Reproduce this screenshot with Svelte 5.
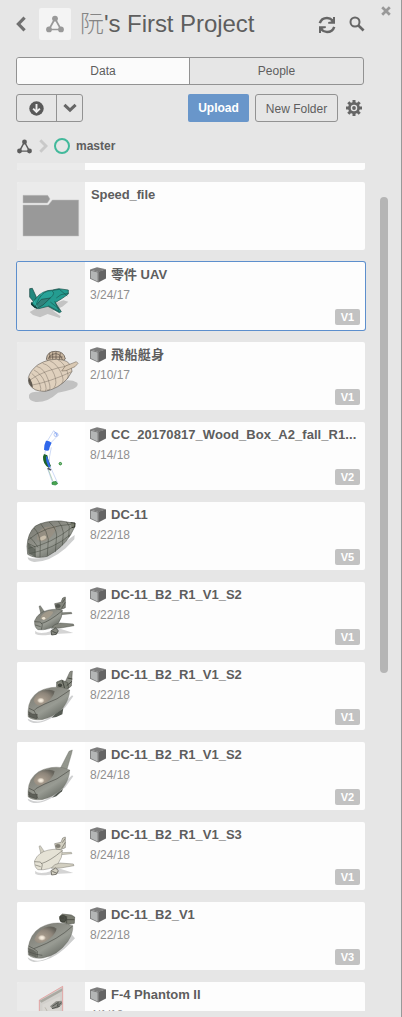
<script>
  const items = [
    { kind: 'blank', name: '', date: '', version: '' },
    { kind: 'folder', name: 'Speed_file', date: '', version: '' },
    { kind: 'uav', name: '零件 UAV', date: '3/24/17', version: 'V1', selected: true },
    { kind: 'airship', name: '飛船艇身', date: '2/10/17', version: 'V1', spaced: true },
    { kind: 'curve', name: 'CC_20170817_Wood_Box_A2_fall_R1...', date: '8/14/18', version: 'V2', wide: true },
    { kind: 'mesh', name: 'DC-11', date: '8/22/18', version: 'V5' },
    { kind: 'plane', name: 'DC-11_B2_R1_V1_S2', date: '8/22/18', version: 'V1' },
    { kind: 'engine', name: 'DC-11_B2_R1_V1_S2', date: '8/22/18', version: 'V1' },
    { kind: 'fin', name: 'DC-11_B2_R1_V1_S2', date: '8/24/18', version: 'V2' },
    { kind: 'paleplane', name: 'DC-11_B2_R1_V1_S3', date: '8/24/18', version: 'V1' },
    { kind: 'pod', name: 'DC-11_B2_V1', date: '8/22/18', version: 'V3' },
    { kind: 'phantom', name: 'F-4 Phantom II', date: '4/1/18', version: '' }
  ];
  const tinted = ['blank', 'folder', 'uav', 'airship', 'phantom'];
  const boxes = {
    uav: '51 306 204 204',
    airship: '21 21 204 204',
    curve: '21 261 204 204',
    mesh: '21 21 204 204',
    plane: '21 261 204 204',
    engine: '21 21 204 204',
    fin: '21 261 204 204',
    paleplane: '21 21 204 204',
    pod: '21 261 204 204',
    phantom: '21 501 204 204',
    folder: '51 66 204 204',
    blank: '0 0 204 204'
  };
</script>

{#snippet network(size, color)}
  <svg width={size} height={size} viewBox="0 0 18 18" fill={color} stroke={color}>
    <path d="M9 3.5L3 14.5H15Z" fill="none" stroke-width="1.7" />
    <circle cx="9" cy="3.6" r="2.9" stroke="none" />
    <circle cx="3" cy="14.4" r="2.9" stroke="none" />
    <circle cx="15" cy="14.4" r="2.9" stroke="none" />
  </svg>
{/snippet}

{#snippet planeShape(body, edge, wing)}
  <path d="M75 408Q90 421 126 407L140 398L165 406L190 414L150 416L120 419Q88 424 76 417Z" fill="#d4d4d4" />
  <path d="M87 334L91 332L104 351L94 363Z" fill={wing} stroke={edge} stroke-width="1" />
  <path d="M152 353L184 352L186 356L154 359Z" fill={wing} stroke={edge} stroke-width="1" />
  <path d="M74 377Q85 351 116 345Q144 340 157 346Q158 367 143 388Q116 407 84 404Q72 397 74 377Z" fill={body} stroke={edge} stroke-width="1.2" />
  <path d="M94 386Q120 378 157 347M73 380L91 381L97 389L94 404M76 390L92 395" fill="none" stroke={edge} stroke-width="1.7" />
  <path d="M134 389L150 384L190 387L192 392L152 399L124 400Z" fill={wing} stroke={edge} stroke-width="1.2" />
  <path d="M134 326L153 322L158 309L166 306L166 338L151 344L138 342Z" fill={wing} stroke={edge} stroke-width="1.5" />
  <ellipse cx="144" cy="333" rx="8" ry="6" fill={edge} opacity=".75" />
  <path d="M157 323L165 311M155 340L166 322" stroke={edge} stroke-width="2" />
  <path d="M123 407L137 399L145 407L139 418L125 420Z" fill={wing} stroke={edge} stroke-width="2.5" />
  <path d="M127 409L141 415" stroke={edge} stroke-width="2.5" />
{/snippet}

{#snippet hull()}
  <path d="M53 431Q88 450 120 425L186 361L190 364L166 397Q112 448 71 444Q54 440 53 431Z" fill="#d0d1d2" />
  <path d="M54 408Q56 369 86 350Q119 332 158 338L179 345Q179 371 159 399Q130 427 96 434Q68 437 54 425Z" fill="url(#grayHull)" stroke="#66665f" stroke-width="1" />
  <path d="M71 377Q74 358 97 347Q124 340 134 349Q130 373 95 391Q78 395 71 377Z" fill="url(#canopy)" />
  <path d="M57 400L72 407L79 400L102 388Q141 376 179 346M72 407L77 416L84 431M55 418L78 422" fill="none" stroke="#3c3c37" stroke-width="1.6" />
  <path d="M56 410Q66 419 82 418L80 432L58 425Z" fill="#5d5f58" stroke="#34342f" />
{/snippet}

{#snippet thumb(kind)}
  <svg width="68" height="68" viewBox={boxes[kind]}>
    {#if kind === 'folder'}
      <path d="M69 106H143L150 117L142 129H69ZM69 135H145L157 120H236V228H69Z" fill="#999" stroke="#bdbdbd" stroke-width="1.5" />
    {:else if kind === 'uav'}
      <path d="M89 456L109 445L142 439L190 421L205 425L187 440L159 452L182 469L179 474L143 462L120 472L99 465Z" fill="#c3c3c3" />
      <path d="M89 386L97 385L109 411L106 431L89 411Z" fill="#24887e" stroke="#17443f" stroke-width="2" />
      <path d="M106 417Q125 391 158 390L176 386L205 390L205 402L187 415L166 428L184 455L178 458L144 439L116 446L102 440L94 431Z" fill="#249c90" stroke="#174b45" stroke-width="2" />
      <path d="M117 416Q131 391 155 392Q168 399 152 413Q127 431 106 439Z" fill="#27a398" stroke="#1b5a53" stroke-width="2" />
      <path d="M106 439L124 418L151 414L129 435L110 446Z" fill="#32817a" stroke="#18443f" stroke-width="1.8" />
      <path d="M158 391L178 388L202 408M169 414L183 404L205 400M145 437L178 455L164 423M151 426L182 451" fill="none" stroke="#18443f" stroke-width="1.5" />
      <path d="M101 421L113 445M121 406L129 396" stroke="#3dbeb1" stroke-width="2" />
      <path d="M94 425L102 436L114 445L105 445L93 434" fill="#143f3a" />
    {:else if kind === 'airship'}
      <path d="M57 180Q63 168 92 171L153 138Q184 132 202 143Q207 153 189 162Q168 169 144 173Q112 203 77 201Q54 197 57 180Z" fill="#c1c1c1" />
      <path d="M109 73Q111 48 137 49Q162 49 166 72L154 81L121 84Z" fill="#c9b7a1" stroke="#4b443d" stroke-width="2" />
      <path d="M114 73Q119 58 137 56Q153 57 157 75M120 73L119 55M128 74V52M138 74V50M148 77L151 54M117 66L158 66" fill="none" stroke="#594d43" stroke-width="2" />
      <path d="M55 128Q60 107 84 89Q120 67 159 75Q184 81 186 109L173 130Q147 160 106 169Q70 171 57 146Z" fill="#dfd0bd" stroke="#3b3732" stroke-width="1.4" />
      <path d="M57 137Q103 103 183 91M63 151Q119 141 185 110M80 94Q103 100 115 135T111 165M98 85Q123 92 133 119T132 158M119 77Q141 87 153 113T154 146M143 74Q161 83 170 105T170 133M72 105Q96 118 104 142T105 168M65 115Q83 129 89 146T91 168" fill="none" stroke="#665b50" stroke-width="1.2" />
      <path d="M155 108L166 93L199 80L204 85L195 95L168 107Z" fill="#d9c9b4" stroke="#665a4c" stroke-width="1.5" />
      <path d="M58 127L66 143L69 158Q58 152 55 137Z" fill="#3a3630" opacity=".75" />
    {:else if kind === 'curve'}
      <path d="M112 318L131 287L145 300L124 322M107 339Q103 355 106 370M124 337Q116 366 118 394M112 399L129 447L142 442L123 400" fill="none" stroke="#8da8e9" stroke-width="1.3" />
      <path d="M114 401L128 437L138 447" fill="none" stroke="#67a467" stroke-width="1.3" />
      <path d="M108 317Q116 316 125 323Q118 336 117 346Q110 349 102 344Q102 328 108 317Z" fill="#3068eb" />
      <path d="M102 357L112 361Q115 381 123 393L116 398Q98 387 99 365Z" fill="#1d632a" />
      <path d="M111 362Q117 379 122 399L115 395Q107 379 108 366Z" fill="#3068eb" />
      <circle cx="138" cy="299" r="6" fill="#fff" stroke="#7999e6" stroke-width="1.5" />
      <path d="M133 290L142 300M139 295V303" stroke="#3b70ed" stroke-width="1.4" />
      <circle cx="151" cy="386" r="3.7" fill="#91bd91" stroke="#258c31" stroke-width="3" />
      <path d="M113 400L123 405" stroke="#555665" stroke-width="5" />
      <path d="M126 442L138 439L143 446L136 450L126 448Z" fill="#49a54f" stroke="#208039" stroke-width="2" />
    {:else if kind === 'mesh'}
      <path d="M53 187Q75 195 103 185L194 120L193 133L167 160Q118 202 72 201Q53 198 53 187Z" fill="#cecfcf" />
      <path d="M51 154Q53 114 76 93Q106 76 153 78L195 85L194 96L181 121Q158 158 112 184Q75 193 53 178Z" fill="url(#grayHull)" stroke="#383c35" stroke-width="1.5" />
      <path d="M80 133Q82 106 106 96L138 93Q139 111 117 132Q96 145 80 133Z" fill="#9a9082" opacity=".7" />
      <ellipse cx="99" cy="129" rx="10" ry="6" fill="#d9cdb8" opacity=".75" transform="rotate(-25 99 129)" />
      <path d="M54 135Q102 92 192 87M55 160Q123 147 189 95M58 176Q133 161 181 119M72 99Q89 117 91 143L90 187M92 86Q112 109 115 133L112 182M117 81Q137 96 140 120L136 171M145 79Q157 93 160 112L157 151M169 80L178 94L176 127M54 145L75 155L76 186M60 127L71 139L84 157" fill="none" stroke="#33382f" stroke-width="1.3" />
      <path d="M54 144L66 155L76 163L76 186L55 175Z" fill="#484e46" opacity=".6" />
      <path d="M182 83L195 84L194 96L185 98" fill="#777b6d" stroke="#25281f" stroke-width="2.5" />
    {:else if kind === 'plane'}
      {@render planeShape('url(#grayHull)', '#40433d', '#84867d')}
      <path d="M91 371Q94 354 118 347L130 350Q127 361 104 376Z" fill="#a89d8c" opacity=".8" />
      <ellipse cx="101" cy="370" rx="5" ry="4" fill="#eee6d5" />
    {:else if kind === 'engine'}
      <path d="M166 80L180 50L187 48L184 93L173 102L166 92Z" fill="#8a8d84" stroke="#4c4d47" stroke-width="1.5" />
      <path d="M140 81L155 75L173 83L176 99L158 103L140 97Z" fill="#777b71" stroke="#45483f" stroke-width="1.7" />
      <ellipse cx="150" cy="91" rx="8" ry="7" fill="#41453e" stroke="#aaa89c" stroke-width="1.7" />
      <path d="M173 69L187 72M170 92L186 79M157 76L164 100" stroke="#3a3c35" stroke-width="2.5" />
      <g transform="translate(0 -240)">{@render hull()}</g>
      <path d="M125 188L136 177L160 160L157 178L139 186Z" fill="#565b54" />
    {:else if kind === 'fin'}
      <path d="M151 340L177 289L187 285L185 295L170 346Z" fill="#93968d" stroke="#6a6d64" stroke-width="1.2" />
      {@render hull()}
      <path d="M126 428L138 417L159 401L156 409L139 424Z" fill="#555a53" />
    {:else if kind === 'paleplane'}
      <g transform="translate(0 -240)">{@render planeShape('#e5e2d5', '#65635a', '#d2cfc1')}</g>
    {:else if kind === 'pod'}
      <path d="M53 427Q81 448 118 426L184 357L195 370L173 392Q127 438 72 441Q55 438 53 427Z" fill="#cdcece" />
      <path d="M54 400Q61 355 91 338Q126 318 166 326L188 332Q191 352 173 380Q143 421 99 429Q72 433 55 420Z" fill="url(#grayHull)" stroke="#5a5c55" stroke-width="1" />
      <path d="M73 374Q80 350 104 338Q128 330 140 341Q136 363 101 382Q80 389 73 374Z" fill="url(#canopy)" />
      <path d="M56 393L71 401L79 398Q143 374 188 333M71 401L82 409V427M54 410L78 418L97 421" fill="none" stroke="#3d3f38" stroke-width="1.6" />
      <path d="M55 399L69 404L80 412L80 428L57 419Z" fill="#555750" opacity=".7" />
      <path d="M148 305L157 297L184 300L194 306L193 325L176 328L153 321Z" fill="#7a7c71" stroke="#44463e" stroke-width="1.5" />
      <ellipse cx="159" cy="311" rx="10" ry="10" fill="#4b4e46" stroke="#35382f" stroke-width="1.5" />
      <path d="M152 309H162M170 303V325M170 314H193" stroke="#3c3e37" stroke-width="2" />
    {:else if kind === 'phantom'}
      <path d="M88 555L158 514V600H88Z" fill="#d2d0cc" stroke="#e78b8b" stroke-width="2" />
      <path d="M89 557L157 520V528L94 563Z" fill="#aaa9a2" />
      <path d="M97 569L151 543V600H97Z" fill="#d9d7d3" />
      <path d="M120 574L138 559L155 557L157 567L144 579L127 582Z" fill="#8c8c86" />
      <path d="M127 574L145 562L142 573L154 563M126 581L150 573" stroke="#4b4e49" stroke-width="2.5" fill="none" />
      <path d="M105 577L111 587L104 593" stroke="#aca99f" stroke-width="2" fill="none" />
    {/if}
  </svg>
{/snippet}

<svg class="defs" width="0" height="0">
  <defs>
    <linearGradient id="grayHull" x1="0" y1="0" x2=".8" y2="1">
      <stop offset="0" stop-color="#77776f" />
      <stop offset=".4" stop-color="#8b8c84" />
      <stop offset=".62" stop-color="#989b93" />
      <stop offset="1" stop-color="#595d56" />
    </linearGradient>
    <radialGradient id="canopy" cx=".34" cy=".68" r=".75">
      <stop offset="0" stop-color="#fff6e8" />
      <stop offset=".13" stop-color="#e6dccd" />
      <stop offset=".24" stop-color="#a3988a" />
      <stop offset=".65" stop-color="#8d857a" />
      <stop offset="1" stop-color="#65635b" />
    </radialGradient>
  </defs>
</svg>

<main class="panel">
  <button class="close" aria-label="Close">
    <svg width="10" height="10" viewBox="0 0 10 10"><path d="M1.2 1.2L8.8 8.8M8.8 1.2L1.2 8.8" stroke="#999" stroke-width="2.7" /></svg>
  </button>
  <header>
    <svg class="back" width="11" height="16" viewBox="0 0 11 16"><path d="M8.6 1.7L2.4 8L8.6 14.3" fill="none" stroke="#707070" stroke-width="3.2" /></svg>
    <div class="project">{@render network(18, '#999')}</div>
    <h1><span>阮</span>'s First Project</h1>
    <svg class="refresh" width="18" height="18" viewBox="0 0 18 18">
      <path d="M1.8 7.2Q3.4 2 9 2Q12.2 2 14.8 4.6M16.2 10.8Q14.6 16 9 16Q5.8 16 3.2 13.4" fill="none" stroke="#666" stroke-width="2.5" />
      <path d="M17 1V7.8H10.2V6L13 5.5L15 3.4V1ZM1 17V10.2H7.8V12L5 12.5L3 14.6V17Z" fill="#666" />
    </svg>
    <svg class="search" width="16" height="16" viewBox="0 0 16 16"><circle cx="6" cy="6" r="4.5" fill="none" stroke="#666" stroke-width="2" /><path d="M9.2 9.2L14.6 14.5" stroke="#666" stroke-width="2.6" /></svg>
  </header>

  <nav class="tabs"><button class="active">Data</button><button>People</button></nav>

  <div class="toolbar">
    <div class="split">
      <button aria-label="Get latest">
        <svg width="15" height="15" viewBox="0 0 15 15"><circle cx="7.5" cy="7.5" r="7.2" fill="#595959" /><path d="M7.5 3V10.6M4.1 7.6L7.5 11L10.9 7.6" fill="none" stroke="#eee" stroke-width="1.9" /></svg>
      </button>
      <button aria-label="More options">
        <svg width="14" height="10" viewBox="0 0 14 10"><path d="M1.4 1.8L7 7.1L12.6 1.8" fill="none" stroke="#666" stroke-width="3" /></svg>
      </button>
    </div>
    <button class="upload">Upload</button>
    <button class="new">New Folder</button>
    <svg class="gear" width="16" height="16" viewBox="0 0 16 16">
      <g stroke="#666" stroke-width="3"><path d="M8 0V16M0 8H16M2.3 2.3L13.7 13.7M2.3 13.7L13.7 2.3" /></g>
      <circle cx="8" cy="8" r="4.6" fill="#e6e6e6" stroke="#666" stroke-width="2.7" /><circle cx="8" cy="8" r="1.9" fill="#666" />
    </svg>
  </div>

  <div class="crumbs">
    {@render network(15, '#5c5c5c')}
    <svg class="chev" width="9" height="14" viewBox="0 0 9 14"><path d="M1.3 1.2L7 7L1.3 12.8" fill="none" stroke="#c9c9c9" stroke-width="2.9" /></svg>
    <i></i><strong>master</strong>
  </div>

  <div class="content">
    <div class="list">
      {#each items as item}
        <article class:selected={item.selected}>
          <div class="thumb" class:tinted={tinted.includes(item.kind)}>{@render thumb(item.kind)}</div>
          <div class="info">
            <div class="name" class:plain={item.kind === 'folder'} class:spaced={item.spaced} class:wide={item.wide}>
              {#if item.date}
                <svg width="16" height="16" viewBox="0 0 16 16"><path d="M0 2.6L7 .2L16 2.2L8.4 5Z" fill="#7c7c7c" /><path d="M8.2 4.8L16 2.2V11.6L8.2 15.6Z" fill="#646464" /><path d="M0 2.6L8.2 4.8V15.6L0 11.8Z" fill="#777" /><path d="M.8 3.7L7.6 5.5V14.4L.8 11.3Z" fill="#b4b6b6" /></svg>
              {/if}
              <span>{item.name}</span>
            </div>
            {#if item.date}<time>{item.date}</time>{/if}
          </div>
          {#if item.version}<span class="badge">{item.version}</span>{/if}
        </article>
      {/each}
    </div>
    <div class="scroll"></div>
  </div>
</main>

<style>
  :global(body) { margin: 0; background: #e6e6e6; }
  * { box-sizing: border-box; }
  .defs { position: absolute; }
  .panel { position: relative; width: 402px; height: 1017px; overflow: hidden; background: #e6e6e6; border-right: 1px solid #999; font: 12px "Liberation Sans", "Noto Sans CJK TC", sans-serif; color: #5e5e5e; }
  svg { display: block; flex: none; }
  button { font: inherit; color: inherit; background: none; border: 0; padding: 0; margin: 0; display: flex; align-items: center; justify-content: center; }
  .close { position: absolute; left: 381px; top: 6px; }
  header { display: flex; align-items: center; height: 32px; margin: 8px 0 0 16px; }
  .project { width: 32px; height: 32px; margin: 0 9px 0 12px; border-radius: 2px; background: #f4f4f4; display: flex; align-items: center; justify-content: center; }
  h1 { font-size: 24px; line-height: 32px; font-weight: 400; margin: 0; width: 238px; white-space: nowrap; letter-spacing: -.05px; }
  h1 span { font-weight: 300; color: #858585; }
  .refresh { margin-top: 2px; }
  .search { margin-left: 13px; }
  .tabs { display: flex; width: 348px; height: 28px; margin: 17px 0 0 16px; border: 1px solid #929292; border-radius: 3px; overflow: hidden; }
  .tabs button { flex: 1; }
  .tabs .active { flex: none; width: 173px; background: #fbfbfb; border-right: 1px solid #929292; }
  .toolbar { display: flex; align-items: center; height: 28px; margin: 9px 0 0 16px; }
  .split { display: flex; width: 67px; height: 28px; border: 1px solid #929292; border-radius: 3px; }
  .split button:first-child { width: 40px; border-right: 1px solid #929292; }
  .split button:last-child { flex: 1; }
  .upload { width: 61px; height: 28px; margin-left: 105px; border-radius: 2px; background: #6996ca; color: #fff; font-weight: 700; }
  .new { width: 83px; height: 28px; margin-left: 6px; border: 1px solid #929292; border-radius: 3px; padding-top: 1px; }
  .gear { margin-left: 8px; }
  .crumbs { display: flex; align-items: center; height: 16px; margin: 16px 0 0 17px; }
  .chev { margin-left: 7px; }
  .crumbs i { width: 16px; height: 16px; margin: 0 6px; border: 2px solid #42b99b; border-radius: 50%; }
  .content { display: flex; height: 848px; margin-top: 9px; overflow: hidden; }
  .list { width: 350px; margin: -61px 0 0 17px; display: flex; flex-direction: column; gap: 12px; flex: none; }
  article { position: relative; flex: none; width: 348px; height: 68px; display: flex; overflow: hidden; background: #fdfdfd; border-radius: 2px; }
  .selected { box-shadow: 0 0 0 1px #5d8fcd; }
  .thumb { width: 68px; height: 68px; background: #fff; flex: none; }
  .tinted { background: #ebebeb; }
  .info { padding: 4px 0 0 5px; }
  .name { display: flex; gap: 5px; align-items: center; height: 17px; white-space: nowrap; font-size: 13px; font-weight: 700; line-height: 17px; }
  .plain { padding-left: 1px; letter-spacing: -.1px; }
  .spaced { letter-spacing: .4px; }
  .wide { letter-spacing: .06px; }
  time { display: block; margin-top: 4px; line-height: 16px; color: #909090; }
  .badge { position: absolute; right: 5px; bottom: 5px; width: 25px; height: 16px; line-height: 16px; text-align: center; border-radius: 2px; background: #c2c2c2; color: #fff; font-size: 11px; font-weight: 700; }
  .scroll { width: 8px; height: 476px; margin: 34px 0 0 13px; border-radius: 4px; background: #b5b5b5; }
</style>
